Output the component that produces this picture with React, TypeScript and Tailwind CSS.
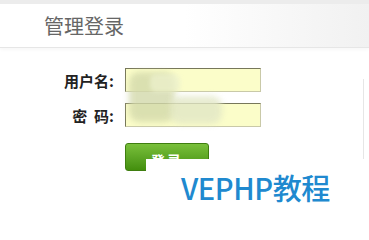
import React from 'react';

const cjk = { fontFamily: '"Noto Sans CJK SC", "Noto Sans", sans-serif' };

const Field: React.FC<{ label: React.ReactNode }> = ({ label }) => (
  <div className="flex items-center">
    <label className="w-[114px] text-right text-[15px] font-bold text-[#222] leading-none">{label}</label>
    <input
      className="ml-[11px] h-[24px] w-[136px] border border-t-[#77775a] border-l-[#77775a] border-r-[#c9c9a8] border-b-[#c9c9a8] bg-[#fbfdc9] outline-none"
      readOnly
    />
  </div>
);

const App: React.FC = () => {
  return (
    <div className="relative h-[219px] w-[369px] overflow-hidden bg-white" style={cjk}>
      <div className="h-[4px] bg-[#ececec]" />
      <div className="flex h-[44px] items-center border-b border-[#e6e6e6] bg-gradient-to-r from-white via-white to-[#f1f1f1] pl-[44px] shadow-[0_2px_3px_rgba(0,0,0,0.03)]">
        <h1 className="text-[20px] font-normal leading-none text-[#666]">管理登录</h1>
      </div>

      <div className="flex flex-col gap-[11px] pt-[20px]">
        <Field label="用户名:" />
        <Field label={<>密&nbsp;&nbsp;码:</>} />
        <div className="pl-[125px] pt-[5px]">
          <button className="h-[28px] w-[84px] rounded-[3px] border border-[#3f7e10] bg-gradient-to-b from-[#79c03a] to-[#438f0c] pt-[5px] text-[14px] font-bold leading-none tracking-[2px] text-white">
            登录
          </button>
        </div>
      </div>

      {/* blurred cover over the filled values */}
      <div className="pointer-events-none absolute left-[129px] top-[72px] h-[50px] w-[46px] rounded-[10px] bg-[#d3d9ab] opacity-80 blur-[3px]" />
      <div className="pointer-events-none absolute left-[150px] top-[74px] h-[18px] w-[30px] rounded-[6px] bg-[#eef2cf] opacity-70 blur-[2px]" />
      <div className="pointer-events-none absolute left-[170px] top-[96px] h-[28px] w-[52px] rounded-[10px] bg-[#e2e7c6] opacity-80 blur-[3px]" />

      <div className="absolute left-[363px] top-[79px] h-[80px] w-px bg-[#e6e6e6]" />

      {/* watermark */}
      <div className="absolute left-[146px] top-[159px] flex h-[60px] w-[223px] items-start bg-white pl-[35px] pt-[10px]">
        <span className="text-[29px] font-medium leading-[36px] tracking-[-0.4px] text-[#2089cf]">VEPHP教程</span>
      </div>
    </div>
  );
};

export default App;
